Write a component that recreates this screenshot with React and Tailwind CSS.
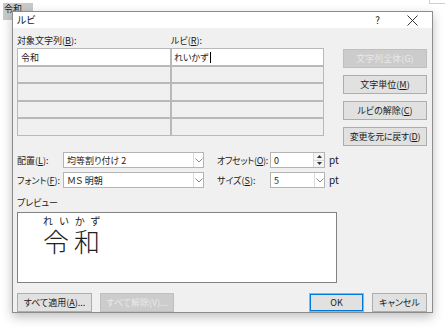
import React from "react";
import clsx from "clsx";

const Chevron = () => (
    <svg width="8" height="5" viewBox="0 0 8 5">
        <polyline points="0.5,0.5 4,4 7.5,0.5" fill="none" stroke="#8a8a8a" strokeWidth="1"/>
    </svg>
)

const Btn = ({children, disabled, primary, className}) => (
    <div
        className={clsx(
            "flex items-center justify-center border whitespace-nowrap",
            disabled ? "bg-[#cccccc] border-[#bfbfbf] text-[#e9e9e9]" : "bg-[#e1e1e1] border-[#adadad] text-[#1a1a1a]",
            primary && "border-[#0078d7] shadow-[inset_0_0_0_1px_#0078d7]",
            className
        )}>
        {children}
    </div>
)

const U = ({children}) => <span className="underline underline-offset-1">{children}</span>

const Combo = ({value, className}) => (
    <div className={clsx("flex h-full border border-[#b4b4b4] bg-white", className)}>
        <div className="flex-1 flex items-center pl-[3px]">{value}</div>
        <div className="w-[10px] border-l border-[#dadada] flex items-center justify-center">
            <Chevron/>
        </div>
    </div>
)

const rowHeights = ["h-[18px]", "h-[17px]", "h-[18px]", "h-[17px]", "h-[18px]"];

export default function App() {
    return (
        <div
            className="relative w-[445px] h-[333px] bg-white overflow-hidden whitespace-nowrap text-[9px] leading-none text-[#1a1a1a] font-['Noto_Sans_CJK_JP',sans-serif] [font-feature-settings:'palt']">
            {/* document behind the dialog */}
            <div className="absolute left-[3px] top-[3px] w-[30px] h-[17px] bg-[#c9c9c9] text-[9px] leading-[10px] pl-[1px] pt-[1px]">
                令和<span className="text-[#888] ml-[3px]">.</span>
            </div>
            <div className="absolute left-[429px] top-0 w-[16px] h-[4px] border-l border-b border-[#cfcfcf]"></div>

            {/* dialog */}
            <div
                className="absolute left-[12px] top-[11px] w-[421px] h-[302px] flex flex-col border border-[#8c8c8c] shadow-[0_4px_10px_rgba(0,0,0,0.25)]">
                <div className="h-[21px] bg-white flex items-center pl-[4px] pr-[14px]">
                    <span className="text-[10px]">ルビ</span>
                    <span className="ml-auto mr-[27px] text-[10px]">?</span>
                    <svg width="11" height="11" viewBox="0 0 11 11">
                        <path d="M0.5 0.5 L10.5 10.5 M10.5 0.5 L0.5 10.5" stroke="#333" strokeWidth="1"/>
                    </svg>
                </div>

                <div className="flex-1 bg-[#f0f0f0] pl-[4px] pr-[5px] flex flex-col">
                    <div className="flex">
                        <div className="w-[307px] flex flex-col">
                            <div className="h-[20px] pt-[4px] flex items-center">
                                <div className="w-[154px]">対象文字列(<U>B</U>):</div>
                                <div>ルビ(<U>R</U>):</div>
                            </div>
                            {rowHeights.map((h, i) => (
                                <div key={i} className={clsx("flex", h)}>
                                    <div
                                        className={clsx("w-[154px] border border-[#b9b9b9] flex items-center pl-[3px]", i === 0 ? "bg-white" : "bg-[#f0f0f0]")}>
                                        {i === 0 && "令和"}
                                    </div>
                                    <div
                                        className={clsx("w-[153px] border border-[#b9b9b9] flex items-center pl-[2px]", i === 0 ? "bg-white" : "bg-[#f0f0f0]")}>
                                        {i === 0 && (
                                            <>
                                                れいかず
                                                <span className="w-px h-[11px] bg-black ml-[1px]"></span>
                                            </>
                                        )}
                                    </div>
                                </div>
                            ))}
                        </div>
                        <div className="ml-[19px] w-[84px] pt-[21px] flex flex-col gap-[7px]">
                            <Btn disabled className="h-[19px]">文字列全体(G)</Btn>
                            <Btn className="h-[19px]">文字単位(<U>M</U>)</Btn>
                            <Btn className="h-[19px]">ルビの解除(<U>C</U>)</Btn>
                            <Btn className="h-[19px] tracking-[-0.3px]">変更を元に戻す(<U>D</U>)</Btn>
                        </div>
                    </div>

                    <div className="mt-[6px] flex flex-col gap-[4px]">
                        <div className="flex h-[16px] items-center">
                            <div className="w-[46px]">配置(<U>L</U>):</div>
                            <Combo value="均等割り付け 2" className="w-[141px]"/>
                            <div className="ml-[13px] w-[53px] tracking-[-0.3px]">オフセット(<U>O</U>):</div>
                            <div className="w-[55px] h-full flex border border-[#b4b4b4] bg-white">
                                <div className="flex-1 flex items-center pl-[3px]">0</div>
                                <div className="w-[11px] flex flex-col border-l border-[#dadada] bg-[#f4f4f4]">
                                    <div className="flex-1 flex items-center justify-center border-b border-[#dadada]">
                                        <svg width="5" height="3" viewBox="0 0 5 3"><polygon points="2.5,0 5,3 0,3" fill="#333"/></svg>
                                    </div>
                                    <div className="flex-1 flex items-center justify-center">
                                        <svg width="5" height="3" viewBox="0 0 5 3"><polygon points="0,0 5,0 2.5,3" fill="#333"/></svg>
                                    </div>
                                </div>
                            </div>
                            <div className="ml-[4px] text-[10px]">pt</div>
                        </div>
                        <div className="flex h-[16px] items-center">
                            <div className="w-[46px]">フォント(<U>F</U>):</div>
                            <Combo value="ＭＳ 明朝" className="w-[141px]"/>
                            <div className="ml-[13px] w-[53px]">サイズ(<U>S</U>):</div>
                            <Combo value="5" className="w-[55px]"/>
                            <div className="ml-[4px] text-[10px]">pt</div>
                        </div>
                    </div>

                    <div className="mt-[6px] h-[16px] flex items-center">プレビュー</div>
                    <div className="mt-[2px] w-[320px] h-[71px] bg-white border border-[#828282] pl-[25px] pt-[3px]">
                        <div className="w-[57px] flex justify-between text-[10px] leading-[10px]">
                            <span>れ</span><span>い</span><span>か</span><span>ず</span>
                        </div>
                        <div className="mt-[2px] w-[57px] flex justify-between text-[26px] leading-[26px] font-light text-[#222]">
                            <span>令</span><span>和</span>
                        </div>
                    </div>

                    <div className="mt-[10px] flex h-[19px]">
                        <Btn className="w-[75px]">すべて適用(<U>A</U>)...</Btn>
                        <Btn disabled className="w-[74px] ml-[8px]">すべて解除(V)...</Btn>
                        <Btn primary className="w-[55px] ml-auto">OK</Btn>
                        <Btn className="w-[55px] ml-[8px]">キャンセル</Btn>
                    </div>
                </div>
            </div>
        </div>
    );
}
